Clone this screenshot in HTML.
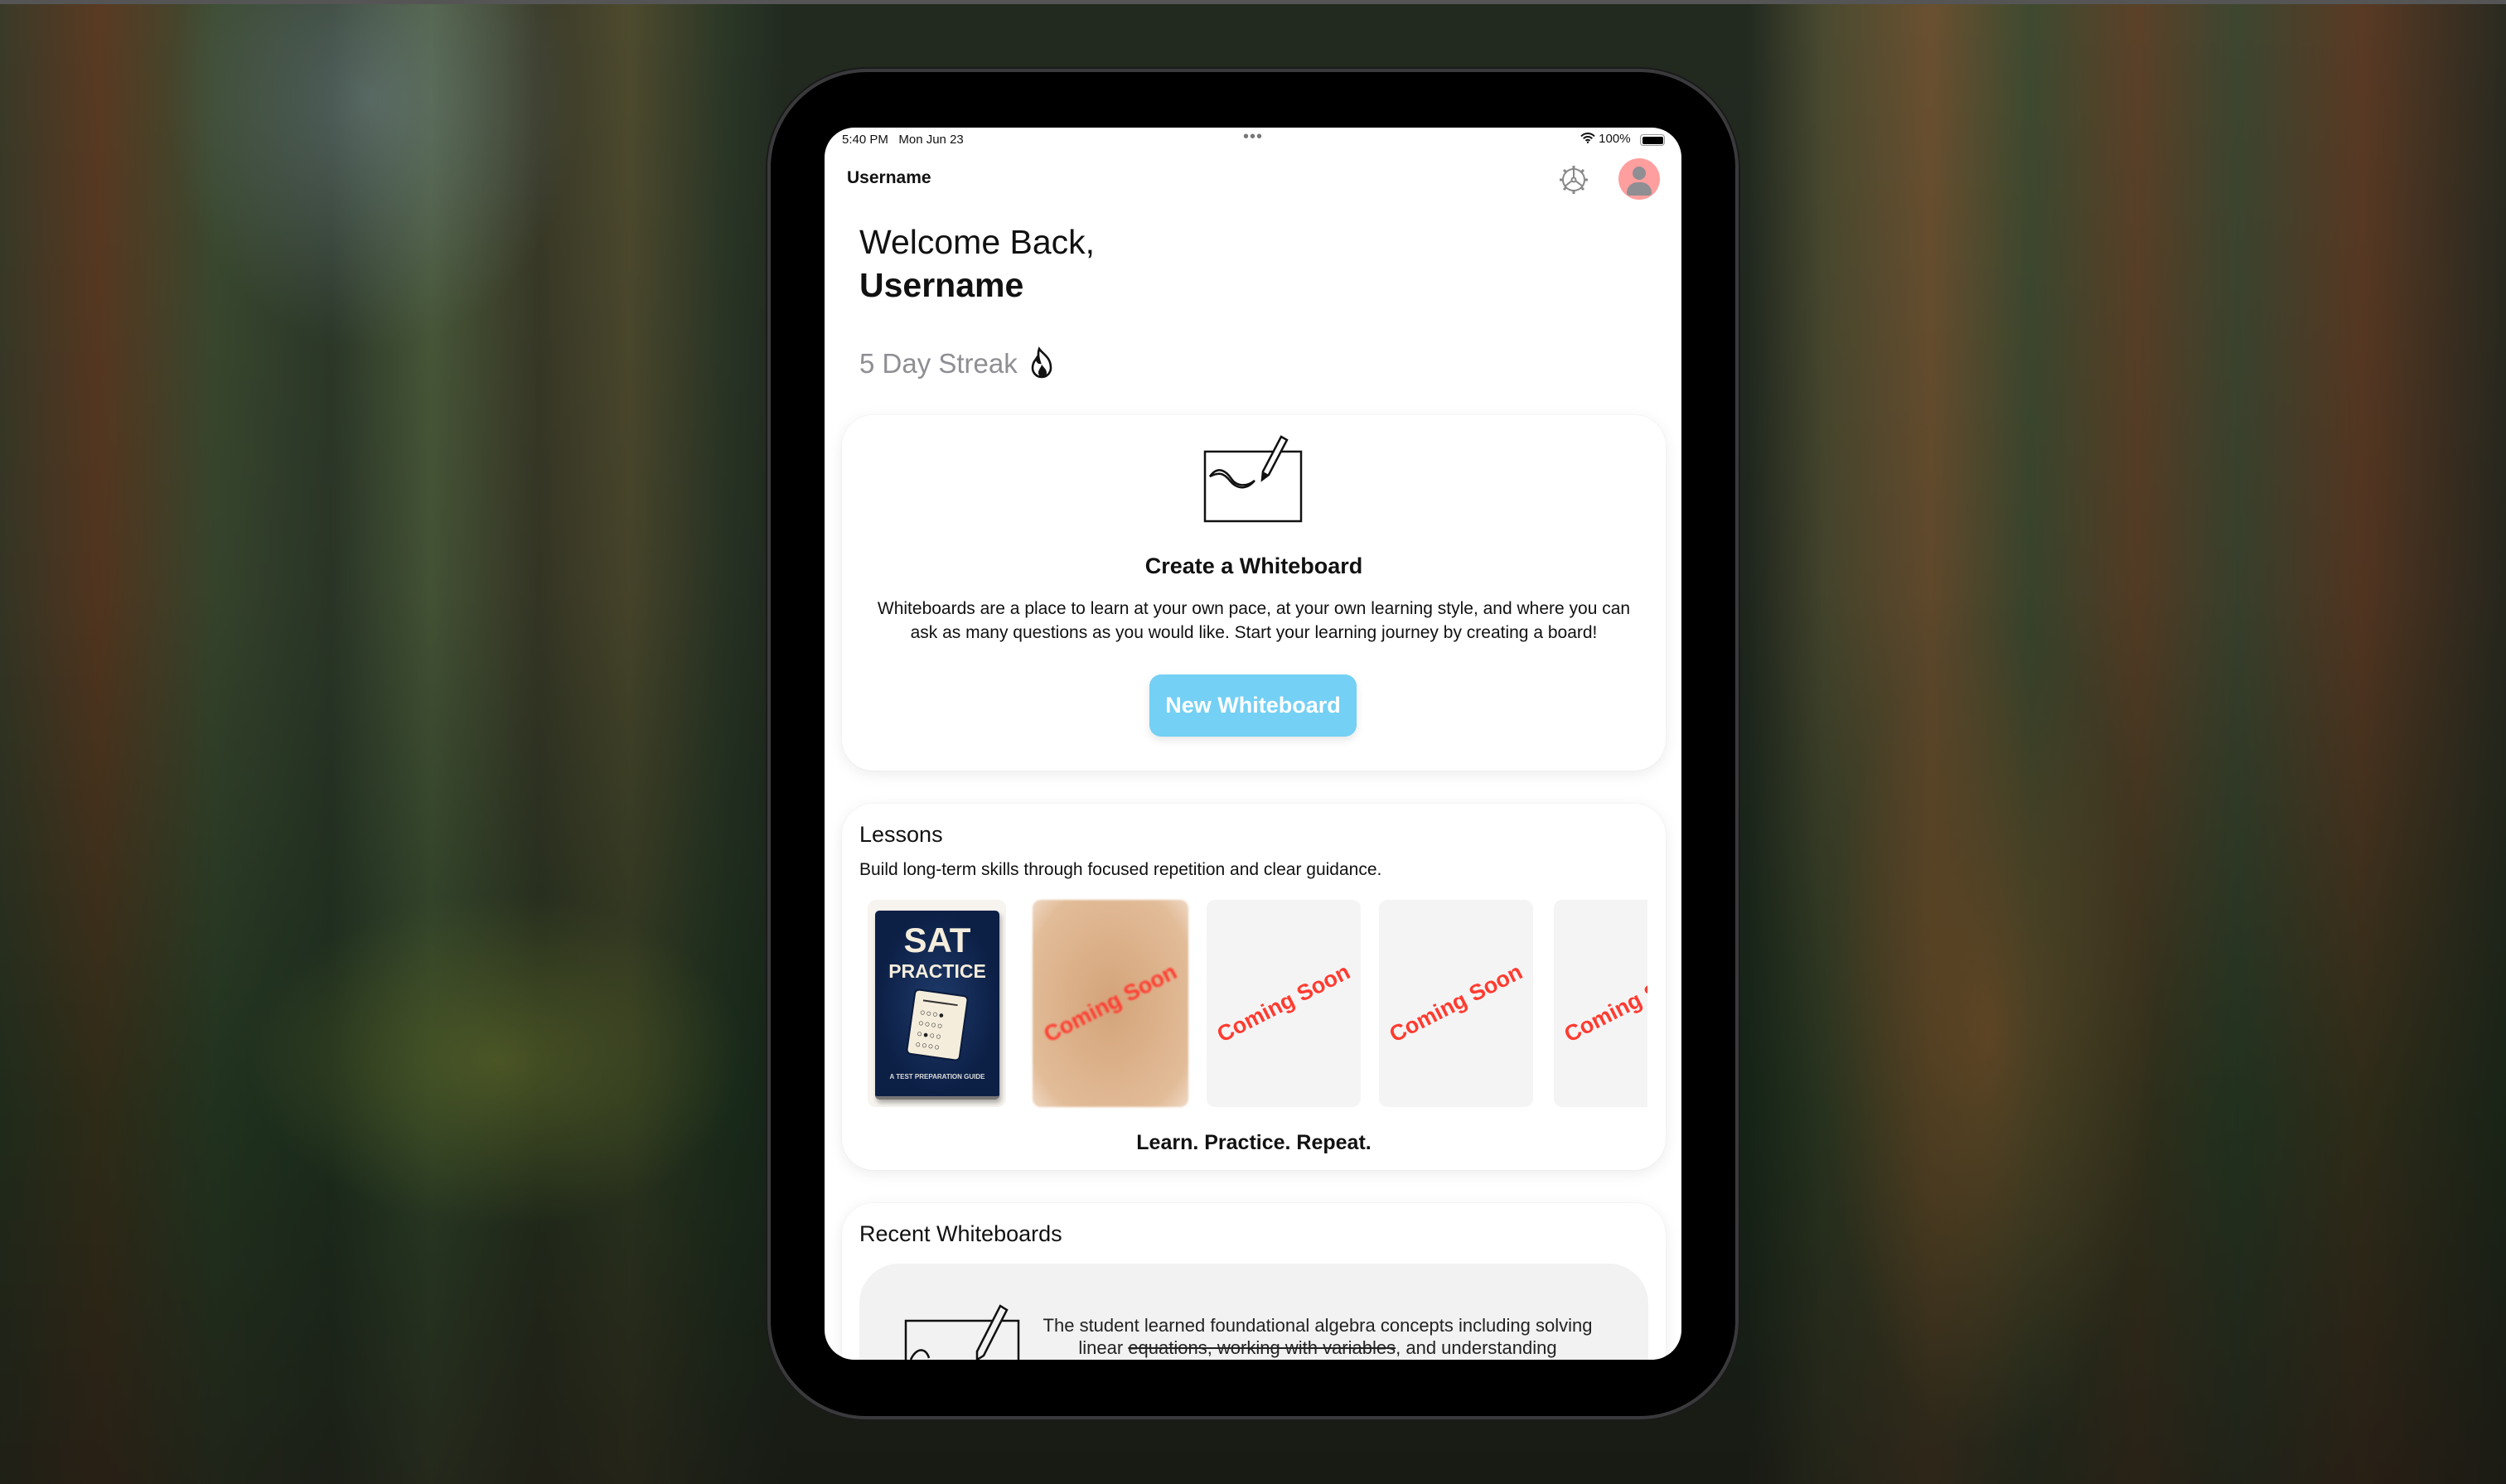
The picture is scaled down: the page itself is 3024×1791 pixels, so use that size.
<!DOCTYPE html>
<html><head><meta charset="utf-8"><style>
*{margin:0;padding:0;box-sizing:border-box}
html,body{width:3024px;height:1791px;overflow:hidden}
body{position:relative;font-family:"Liberation Sans",sans-serif;background:#1d2418}
.bg{position:absolute;inset:0;
background:
radial-gradient(ellipse 300px 200px at 600px 1280px,rgba(90,100,40,.7),transparent),
radial-gradient(ellipse 200px 500px at 2400px 1250px,rgba(130,80,40,.55),transparent),
radial-gradient(ellipse 250px 300px at 450px 120px,rgba(120,140,150,.5),transparent),
linear-gradient(180deg,rgba(0,0,0,0) 0,rgba(0,0,0,.1) 40%,rgba(10,30,15,.55) 75%,rgba(20,20,15,.7) 100%),
linear-gradient(90deg,#3a3a28 0,#5a3a22 120px,#3b4a30 260px,#2e3a2a 400px,#4a5a3a 520px,#3a3a28 650px,#4d4a2e 760px,#2a3626 880px,#222a20 950px,#222a20 2110px,#4a4a30 2200px,#6a5030 2330px,#3e4a30 2450px,#5b4128 2580px,#3d4630 2700px,#5a3a24 2850px,#2a2a20 3024px);}
.top{position:absolute;left:0;top:0;width:3024px;height:5px;background:#555}
.dev{position:absolute;left:926px;top:83px;width:1172px;height:1630px;border-radius:120px;background:#000;border:4px solid #3a3a3c;box-shadow:0 0 0 2px #1a1a1a}
.scr{position:absolute;left:995px;top:154px;width:1034px;height:1487px;border-radius:36px;background:#fff;overflow:hidden}
.a{position:absolute;white-space:nowrap}
.card{position:absolute;left:21px;width:994px;background:#fff;border-radius:38px;box-shadow:0 4px 18px rgba(0,0,0,.08),0 0 2px rgba(0,0,0,.05)}
.tile{position:absolute;top:932px;height:250px;border-radius:10px;overflow:hidden}
.cs{position:absolute;left:50%;top:50%;transform:translate(-50%,-50%) rotate(-27deg);color:#ff3b30;font-weight:bold;font-size:27px;white-space:nowrap}
</style></head><body>
<div class="bg"></div><div class="top"></div>
<div class="dev"></div>
<div class="scr">
 <div class="a" style="left:21px;top:6px;font-size:15px;color:#111">5:40 PM&nbsp;&nbsp; Mon Jun 23</div>
 <div class="a" style="left:505px;top:0px;font-size:20px;color:#777;letter-spacing:1px">•••</div>
 <div class="a" style="left:912px;top:5px;font-size:15px;color:#111">
  <svg width="18" height="13" viewBox="0 0 18 13" style="vertical-align:-1px"><path d="M1 4.5a11 11 0 0 1 16 0M3.8 7.3a7 7 0 0 1 10.4 0M6.6 10a3 3 0 0 1 4.8 0" stroke="#111" stroke-width="2" fill="none"/><circle cx="9" cy="11.8" r="1.2" fill="#111"/></svg> 100%</div>
 <div class="a" style="left:984px;top:8px;width:30px;height:14px;border:1.5px solid #999;border-radius:4px;padding:1.5px"><div style="width:100%;height:100%;background:#000;border-radius:2px"></div></div>
 <div class="a" style="left:27px;top:49px;font-size:21px;font-weight:bold;color:#111">Username</div>
 <svg class="a" style="left:885px;top:44px" width="38" height="38" viewBox="0 0 38 38"><g fill="none" stroke="#888" stroke-width="2"><circle cx="19" cy="19" r="13"/><circle cx="19" cy="19" r="2.5"/><path d="M19 6v10.5M21.2 20.2l9 7M16.8 20.2l-9 7"/></g><g stroke="#888" stroke-width="3"><path d="M19 2v4M19 32v4M2 19h4M32 19h4M7 7l3 3M28 28l3 3M31 7l-3 3M7 31l3-3"/></g></svg>
 <div class="a" style="left:958px;top:37px;width:50px;height:50px;border-radius:50%;background:#ff9e9e;overflow:hidden">
  <div style="position:absolute;left:17px;top:10px;width:16px;height:16px;border-radius:50%;background:#8e8e93"></div>
  <div style="position:absolute;left:10px;top:29px;width:30px;height:16px;border-radius:15px 15px 4px 4px;background:#8e8e93"></div></div>
 <div class="a" style="left:42px;top:115px;font-size:41px;color:#111">Welcome Back,</div>
 <div class="a" style="left:42px;top:167px;font-size:41px;font-weight:bold;color:#111">Username</div>
 <div class="a" style="left:42px;top:266px;font-size:33px;color:#8e8e93">5 Day Streak</div>
 <svg class="a" style="left:245px;top:264px" width="34" height="42" viewBox="0 0 34 42"><path d="M14 3c4 6 14 10 14 23a11 11 0 0 1-22 0c0-6 3-9 5-12 0 4 2 6 4 6-2-6-3-11-1-17z" fill="none" stroke="#111" stroke-width="2.6"/><path d="M17 22c3 4 6 6 6 10a5 5 0 0 1-10 0c0-4 3-6 4-10z" fill="#111"/></svg>

 <div class="card" style="top:347px;height:429px">
  <svg class="a" style="left:436px;top:20px" width="122" height="112" viewBox="0 0 122 112"><rect x="2" y="24" width="116" height="84" fill="none" stroke="#111" stroke-width="2.5"/><path d="M8 54c10-14 20-6 26 3s18 10 28 2c-10 12-22 10-30 0s-14-10-24-5z" fill="none" stroke="#111" stroke-width="2.5"/><path d="M72 48l22-42 7 4-22 42-8 6z" fill="#fff" stroke="#111" stroke-width="2.5"/><path d="M71 58l1-10 7 4z" fill="#111"/></svg>
  <div class="a" style="left:0;width:994px;text-align:center;top:167px;font-size:27px;font-weight:bold;color:#111">Create a Whiteboard</div>
  <div class="a" style="left:0;width:994px;text-align:center;top:219px;font-size:21px;color:#111;line-height:29px;white-space:normal;padding:0 25px">Whiteboards are a place to learn at your own pace, at your own learning style, and where you can ask as many questions as you would like. Start your learning journey by creating a board!</div>
  <div class="a" style="left:371px;top:313px;width:250px;height:75px;border-radius:14px;background:#74d0f4;box-shadow:0 4px 10px rgba(0,0,0,.1);color:#fff;font-size:27px;font-weight:bold;text-align:center;line-height:75px">New Whiteboard</div>
 </div>

 <div class="card" style="top:816px;height:442px">
  <div class="a" style="left:21px;top:22px;font-size:27px;color:#111">Lessons</div>
  <div class="a" style="left:21px;top:68px;font-size:21px;color:#111">Build long-term skills through focused repetition and clear guidance.</div>
  <div class="a" style="left:0;width:994px;text-align:center;top:395px;font-size:25px;font-weight:bold;color:#111">Learn. Practice. Repeat.</div>
 </div>
 <div class="tile" style="left:52px;width:167px;background:#f7f3ee">
  <div style="position:absolute;left:9px;top:13px;width:150px;height:228px;border-radius:5px;background:radial-gradient(ellipse at 50% 50%,#1e3a6a,#0c1f45 70%);box-shadow:2px 4px 6px rgba(0,0,0,.3);border-bottom:4px solid #777">
   <div style="position:absolute;width:100%;top:12px;text-align:center;color:#f5eddc;font-weight:bold;font-size:42px">SAT</div>
   <div style="position:absolute;width:100%;top:60px;text-align:center;color:#f5eddc;font-weight:bold;font-size:23px">PRACTICE</div>
   <div style="position:absolute;left:42px;top:98px;width:66px;height:80px;border-radius:6px;background:#f5eddc;border:2px solid #0a1a3a;transform:rotate(8deg)">
    <div style="position:absolute;left:10px;top:10px;width:42px;height:2px;background:#333"></div>
    <div style="position:absolute;left:8px;top:20px;font-size:11px;line-height:13px;color:#222;letter-spacing:1px">○○○●<br>○○○○<br>○●○○<br>○○○○</div></div>
   <div style="position:absolute;width:100%;top:196px;text-align:center;color:#ddd;font-size:8px;font-weight:bold">A TEST PREPARATION GUIDE</div>
  </div></div>
 <div class="tile" style="left:251px;width:188px;background:radial-gradient(ellipse at 50% 50%,#d4a47a,#e2bc98 80%,#efd8c4);filter:blur(1px)"><div class="cs">Coming Soon</div></div>
 <div class="tile" style="left:461px;width:186px;background:#f4f4f4"><div class="cs">Coming Soon</div></div>
 <div class="tile" style="left:669px;width:186px;background:#f4f4f4"><div class="cs">Coming Soon</div></div>
 <div class="tile" style="left:880px;width:113px;background:#f4f4f4;border-radius:10px 0 0 10px"><div class="cs" style="left:93px">Coming Soon</div></div>

 <div class="card" style="top:1298px;height:300px">
  <div class="a" style="left:21px;top:22px;font-size:27px;color:#111">Recent Whiteboards</div>
  <div class="a" style="left:21px;top:73px;width:952px;height:260px;border-radius:48px;background:#f2f2f2"></div>
 </div>
 <svg class="a" style="left:96px;top:1415px" width="150" height="80" viewBox="0 0 150 80"><rect x="2" y="25" width="136" height="90" fill="none" stroke="#111" stroke-width="2.5"/><path d="M8 72c6-14 18-16 22-2" fill="none" stroke="#111" stroke-width="2.5"/><path d="M88 62l28-55 8 5-28 55-8 5z" fill="#f2f2f2" stroke="#111" stroke-width="2.5"/></svg>
 <div class="a" style="left:255px;top:1432px;width:680px;text-align:center;font-size:22px;line-height:27px;color:#222;white-space:normal">The student learned foundational algebra concepts including solving linear <s>equations, working with variables</s>, and understanding</div>
</div>
</body></html>
